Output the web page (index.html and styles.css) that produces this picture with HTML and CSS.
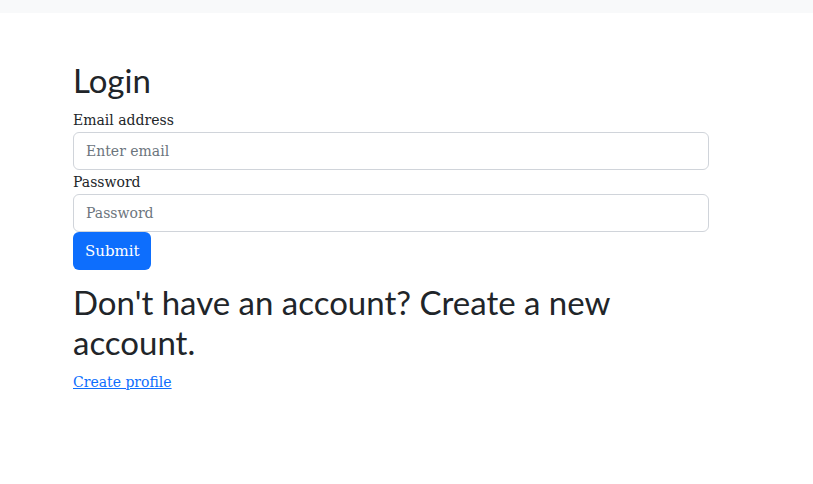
FILE: index.html
```html
<!DOCTYPE html>
<html lang="en">
<head>
<meta charset="utf-8">
<title>Login</title>
<link rel="stylesheet" href="styles.css">
</head>
<body>
<nav class="topbar"></nav>
<main class="page">
  <h1 class="title">Login</h1>
  <form class="form">
    <label class="label" for="email">Email address</label>
    <input class="input" id="email" type="email" placeholder="Enter email">
    <label class="label" for="pw">Password</label>
    <input class="input" id="pw" type="password" placeholder="Password">
    <button class="btn" type="button">Submit</button>
  </form>
  <h1 class="title title-sub">Don't have an account? Create a new account.</h1>
  <a class="link" href="#">Create profile</a>
</main>
</body>
</html>
```
FILE: styles.css
```css
* { box-sizing: border-box; }
html, body { margin: 0; padding: 0; background: #fff; }
body {
  font-family: "DejaVu Serif", "Liberation Serif", serif;
  font-size: 14px;
  line-height: 24px;
  color: #212529;
}
.topbar { height: 13px; background: #f8f9fa; }
.page { padding: 47px 0 0 73px; width: 709px; }
.title {
  margin: 0 0 8px;
  font-family: Lato, "Noto Sans", sans-serif;
  font-weight: 400;
  font-size: 33px;
  line-height: 40px;
}
.title-sub { margin-top: 12px; width: 560px; }
.form { display: flex; flex-direction: column; align-items: flex-start; }
.label { display: block; }
.input {
  width: 100%;
  height: 38px;
  padding: 6px 12px;
  border: 1px solid #d0d4da;
  border-radius: 6px;
  font: inherit;
  color: #212529;
}
.input::placeholder { color: #6c757d; }
.btn {
  width: 78px;
  height: 38px;
  padding: 6px 12px;
  border: 0;
  border-radius: 6px;
  background: #0d6efd;
  color: #fff;
  font: inherit;
  font-size: 15px;
}
.link { color: #0d6efd; text-decoration: underline; }
```
